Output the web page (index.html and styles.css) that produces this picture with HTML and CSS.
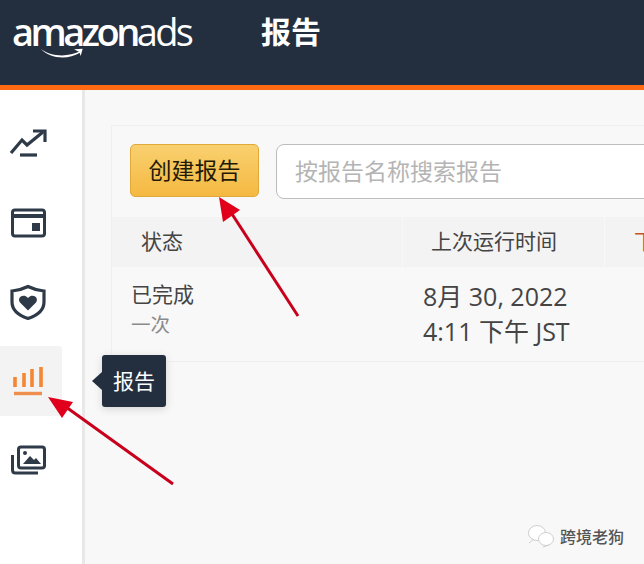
FILE: index.html
```html
<!DOCTYPE html>
<html lang="zh">
<head>
    <meta charset="UTF-8">
    <title>报告</title>
    <link rel="stylesheet" href="styles.css">
</head>
<body>
    <header class="topbar">
        <div class="logo">
            <span class="logo-text"><b>amazon</b>ads</span>
            <svg class="logo-smile" width="66" height="18" viewBox="0 0 66 18">
                <path d="M1 1 C14 12 40 15 60 5 L60 7 C40 19 14 15 1 1 Z" fill="#fff"/>
                <path d="M51 2 L64 1 L61 12 L59 6 Z" fill="#fff"/>
            </svg>
        </div>
        <h1 class="page-title">报告</h1>
    </header>

    <div class="layout">
        <nav class="sidebar">
            <div class="nav-item">
                <svg width="38" height="34" viewBox="0 0 38 34" fill="none" stroke="#2f3a48" stroke-width="3.200">
                    <path d="M2 26 L13 13 L18 18 L34 5"/>
                    <path d="M24 4 H36 V15"/>
                    <path d="M11 28 H28"/>
                </svg>
            </div>
            <div class="nav-item">
                <svg width="36" height="30" viewBox="0 0 36 30" fill="none" stroke="#2f3a48" stroke-width="3">
                    <rect x="2.500" y="2" width="32" height="26" rx="2.500"/>
                    <path d="M3 8 H34" stroke-width="4"/>
                    <rect x="22" y="15" width="8" height="8" fill="#2f3a48" stroke="none"/>
                </svg>
            </div>
            <div class="nav-item">
                <svg width="36" height="36" viewBox="0 0 36 36" fill="none">
                    <path d="M18 2.500 C23 5 28 6.500 34 7 V18 C34 26 27 31.500 18 34.500 C9 31.500 2 26 2 18 V7 C8 6.500 13 5 18 2.500 Z" stroke="#2f3a48" stroke-width="3.200"/>
                    <path d="M18 26.500 L10 18.500 C6.500 13.500 13.500 9 18 14 C22.500 9 29.500 13.500 26 18.500 Z" fill="#2f3a48"/>
                </svg>
            </div>
            <div class="nav-item active">
                <svg width="32" height="30" viewBox="0 0 32 30" fill="none" stroke="#f58634" stroke-width="3.600">
                    <path d="M3 21 V11"/>
                    <path d="M12 21 V7"/>
                    <path d="M20 21 V3"/>
                    <path d="M29 21 V1"/>
                    <path d="M2 27.500 H30" stroke-width="3.400" stroke="#ef8f4f"/>
                </svg>
            </div>
            <div class="nav-item">
                <svg width="36" height="30" viewBox="0 0 36 30" fill="none">
                    <rect x="8.500" y="2" width="26" height="21" rx="2.500" stroke="#2f3a48" stroke-width="3"/>
                    <path d="M2.500 10 V25 C2.500 27 3.500 28 5.500 28 H28" stroke="#2f3a48" stroke-width="3"/>
                    <circle cx="15" cy="8" r="2" fill="#2f3a48"/>
                    <path d="M13 19 L20 11 L24 15 L26 13 L31 19 Z" fill="#2f3a48"/>
                </svg>
            </div>
        </nav>

        <main class="content">
            <section class="card">
                <div class="toolbar">
                    <button class="create-btn">创建报告</button>
                    <input class="search" type="text" placeholder="按报告名称搜索报告">
                </div>
                <div class="row head">
                    <div class="col col-status">状态</div>
                    <div class="col col-time">上次运行时间</div>
                    <div class="col col-next">下次运行</div>
                </div>
                <div class="row body-row">
                    <div class="col col-status">
                        <div class="status-main">已完成</div>
                        <div class="status-sub">一次</div>
                    </div>
                    <div class="col col-time">
                        <div>8月 30, 2022</div>
                        <div>4:11 下午 JST</div>
                    </div>
                    <div class="col col-next"></div>
                </div>
            </section>
        </main>
    </div>

    <div class="tooltip">报告</div>

    <!-- red arrows drawn over the screenshot -->
    <svg class="arrows" width="644" height="564" viewBox="0 0 644 564">
        <path d="M298 316 L232 214" stroke="#c8001c" stroke-width="3"/>
        <path d="M219 197 L240 210 L223 222 Z" fill="#e0001b"/>
        <path d="M173 484 L66 407" stroke="#c8001c" stroke-width="3"/>
        <path d="M48 397 L73 402 L62 418 Z" fill="#e0001b"/>
    </svg>

    <div class="watermark">
        <svg width="28" height="24" viewBox="0 0 28 24" fill="#fff" stroke="#cfcfcf">
            <ellipse cx="10" cy="9" rx="8.500" ry="7.500"/>
            <ellipse cx="19" cy="15" rx="7.500" ry="6.500"/>
            <path d="M2 19 L7 15 M16 23 L22 21"/>
        </svg>
        <span>跨境老狗</span>
    </div>
</body>
</html>
```

FILE: styles.css
```css
* {
    margin: 0;
    padding: 0;
    box-sizing: border-box;
}

body {
    width: 644px;
    height: 564px;
    overflow: hidden;
    position: relative;
    font-family: "Noto Sans CJK SC", "Liberation Sans", sans-serif;
    background: #f8f8f8;
    color: #333;
}

.topbar {
    height: 90px;
    background: #232f3e;
    border-bottom: 5px solid #ff6a13;
    display: flex;
    align-items: flex-start;
    padding-left: 12px;
}

.logo {
    width: 249px;
    height: 60px;
    padding-top: 6px;
    display: flex;
    flex-direction: column;
}

.logo-text {
    font-family: "Open Sans", sans-serif;
    font-size: 38px;
    line-height: 50px;
    letter-spacing: -2.700px;
    color: #fff;
}

.logo-text b {
    font-weight: 600;
    letter-spacing: -3.500px;
}

.logo-smile {
    margin: -8px 0 0 17px;
}

.page-title {
    font-size: 30px;
    line-height: 40px;
    font-weight: 700;
    color: #fff;
    margin-top: 10px;
}

.layout {
    display: flex;
    height: 474px;
}

.sidebar {
    width: 85px;
    background: #fff;
    border-right: 3px solid #e8e8e8;
    padding-top: 19px;
    display: flex;
    flex-direction: column;
    gap: 9px;
}

.nav-item {
    width: 62px;
    height: 70px;
    padding-right: 6px;
    display: flex;
    align-items: center;
    justify-content: center;
}

.nav-item.active {
    background: #f3f3f3;
    border-radius: 0 4px 4px 0;
}

.content {
    flex: 1;
    padding: 35px 0 0 26px;
    min-width: 0;
}

.card {
    width: 600px;
    height: 237px;
    background: #f8f8f8;
    border: 1px solid #efefef;
    border-right: none;
}

.toolbar {
    height: 91px;
    padding: 18px 0 0 18px;
    display: flex;
    gap: 17px;
    align-items: flex-start;
}

.create-btn {
    width: 129px;
    height: 53px;
    padding-bottom: 3px;
    border: 1px solid #e0a93a;
    border-radius: 5px;
    background: linear-gradient(#f9d06f, #f5b942);
    font-family: inherit;
    font-size: 23px;
    color: #231a05;
}

.search {
    width: 420px;
    height: 55px;
    border: 1px solid #bdbdbd;
    border-radius: 8px;
    background: #fff;
    padding: 0 0 3px 18px;
    font-family: inherit;
    font-size: 23px;
}

.search::placeholder {
    color: #b4b4b4;
}

.row {
    display: flex;
}

.head {
    height: 50px;
    background: #f3f3f3;
    font-size: 21px;
    color: #444;
}

.head .col {
    height: 100%;
    padding-bottom: 4px;
    display: flex;
    align-items: center;
    border-right: 1px solid #f8f8f8;
}

.body-row {
    height: 95px;
    border-bottom: 1px solid #efefef;
}

.col {
    flex-shrink: 0;
}

.col-status {
    width: 291px;
    padding-left: 29px;
}

.col-time {
    width: 202px;
    padding-left: 28px;
}

.head .col-next {
    color: #c7511f;
    padding-left: 29px;
    border-right: none;
    white-space: nowrap;
}

.body-row .col-status {
    padding: 11px 0 0 19px;
}

.status-main {
    font-size: 21px;
    line-height: 30px;
    color: #444;
}

.status-sub {
    margin-top: 2px;
    font-size: 19.500px;
    line-height: 28px;
    color: #8a8a8a;
}

.body-row .col-time {
    padding: 12px 0 0 20px;
    font-family: "Open Sans", "Noto Sans CJK SC", sans-serif;
    font-size: 25px;
    line-height: 35px;
    color: #444;
    white-space: nowrap;
}

.tooltip {
    position: absolute;
    left: 102px;
    top: 355px;
    width: 64px;
    height: 52px;
    padding-bottom: 2px;
    background: #232f3e;
    color: #fff;
    border-radius: 3px;
    font-size: 21px;
    line-height: 50px;
    text-align: center;
    box-shadow: 0 2px 8px rgba(0, 0, 0, 0.15);
}

.tooltip::before {
    content: "";
    position: absolute;
    left: -10px;
    top: 17px;
    border-style: solid;
    border-width: 9px 10px 9px 0;
    border-color: transparent #232f3e transparent transparent;
}

.arrows {
    position: absolute;
    left: 0;
    top: 0;
}

.watermark {
    position: absolute;
    left: 527px;
    top: 524px;
    display: flex;
    align-items: center;
    gap: 5px;
    font-size: 16px;
    font-weight: 500;
    color: #555;
}
```
